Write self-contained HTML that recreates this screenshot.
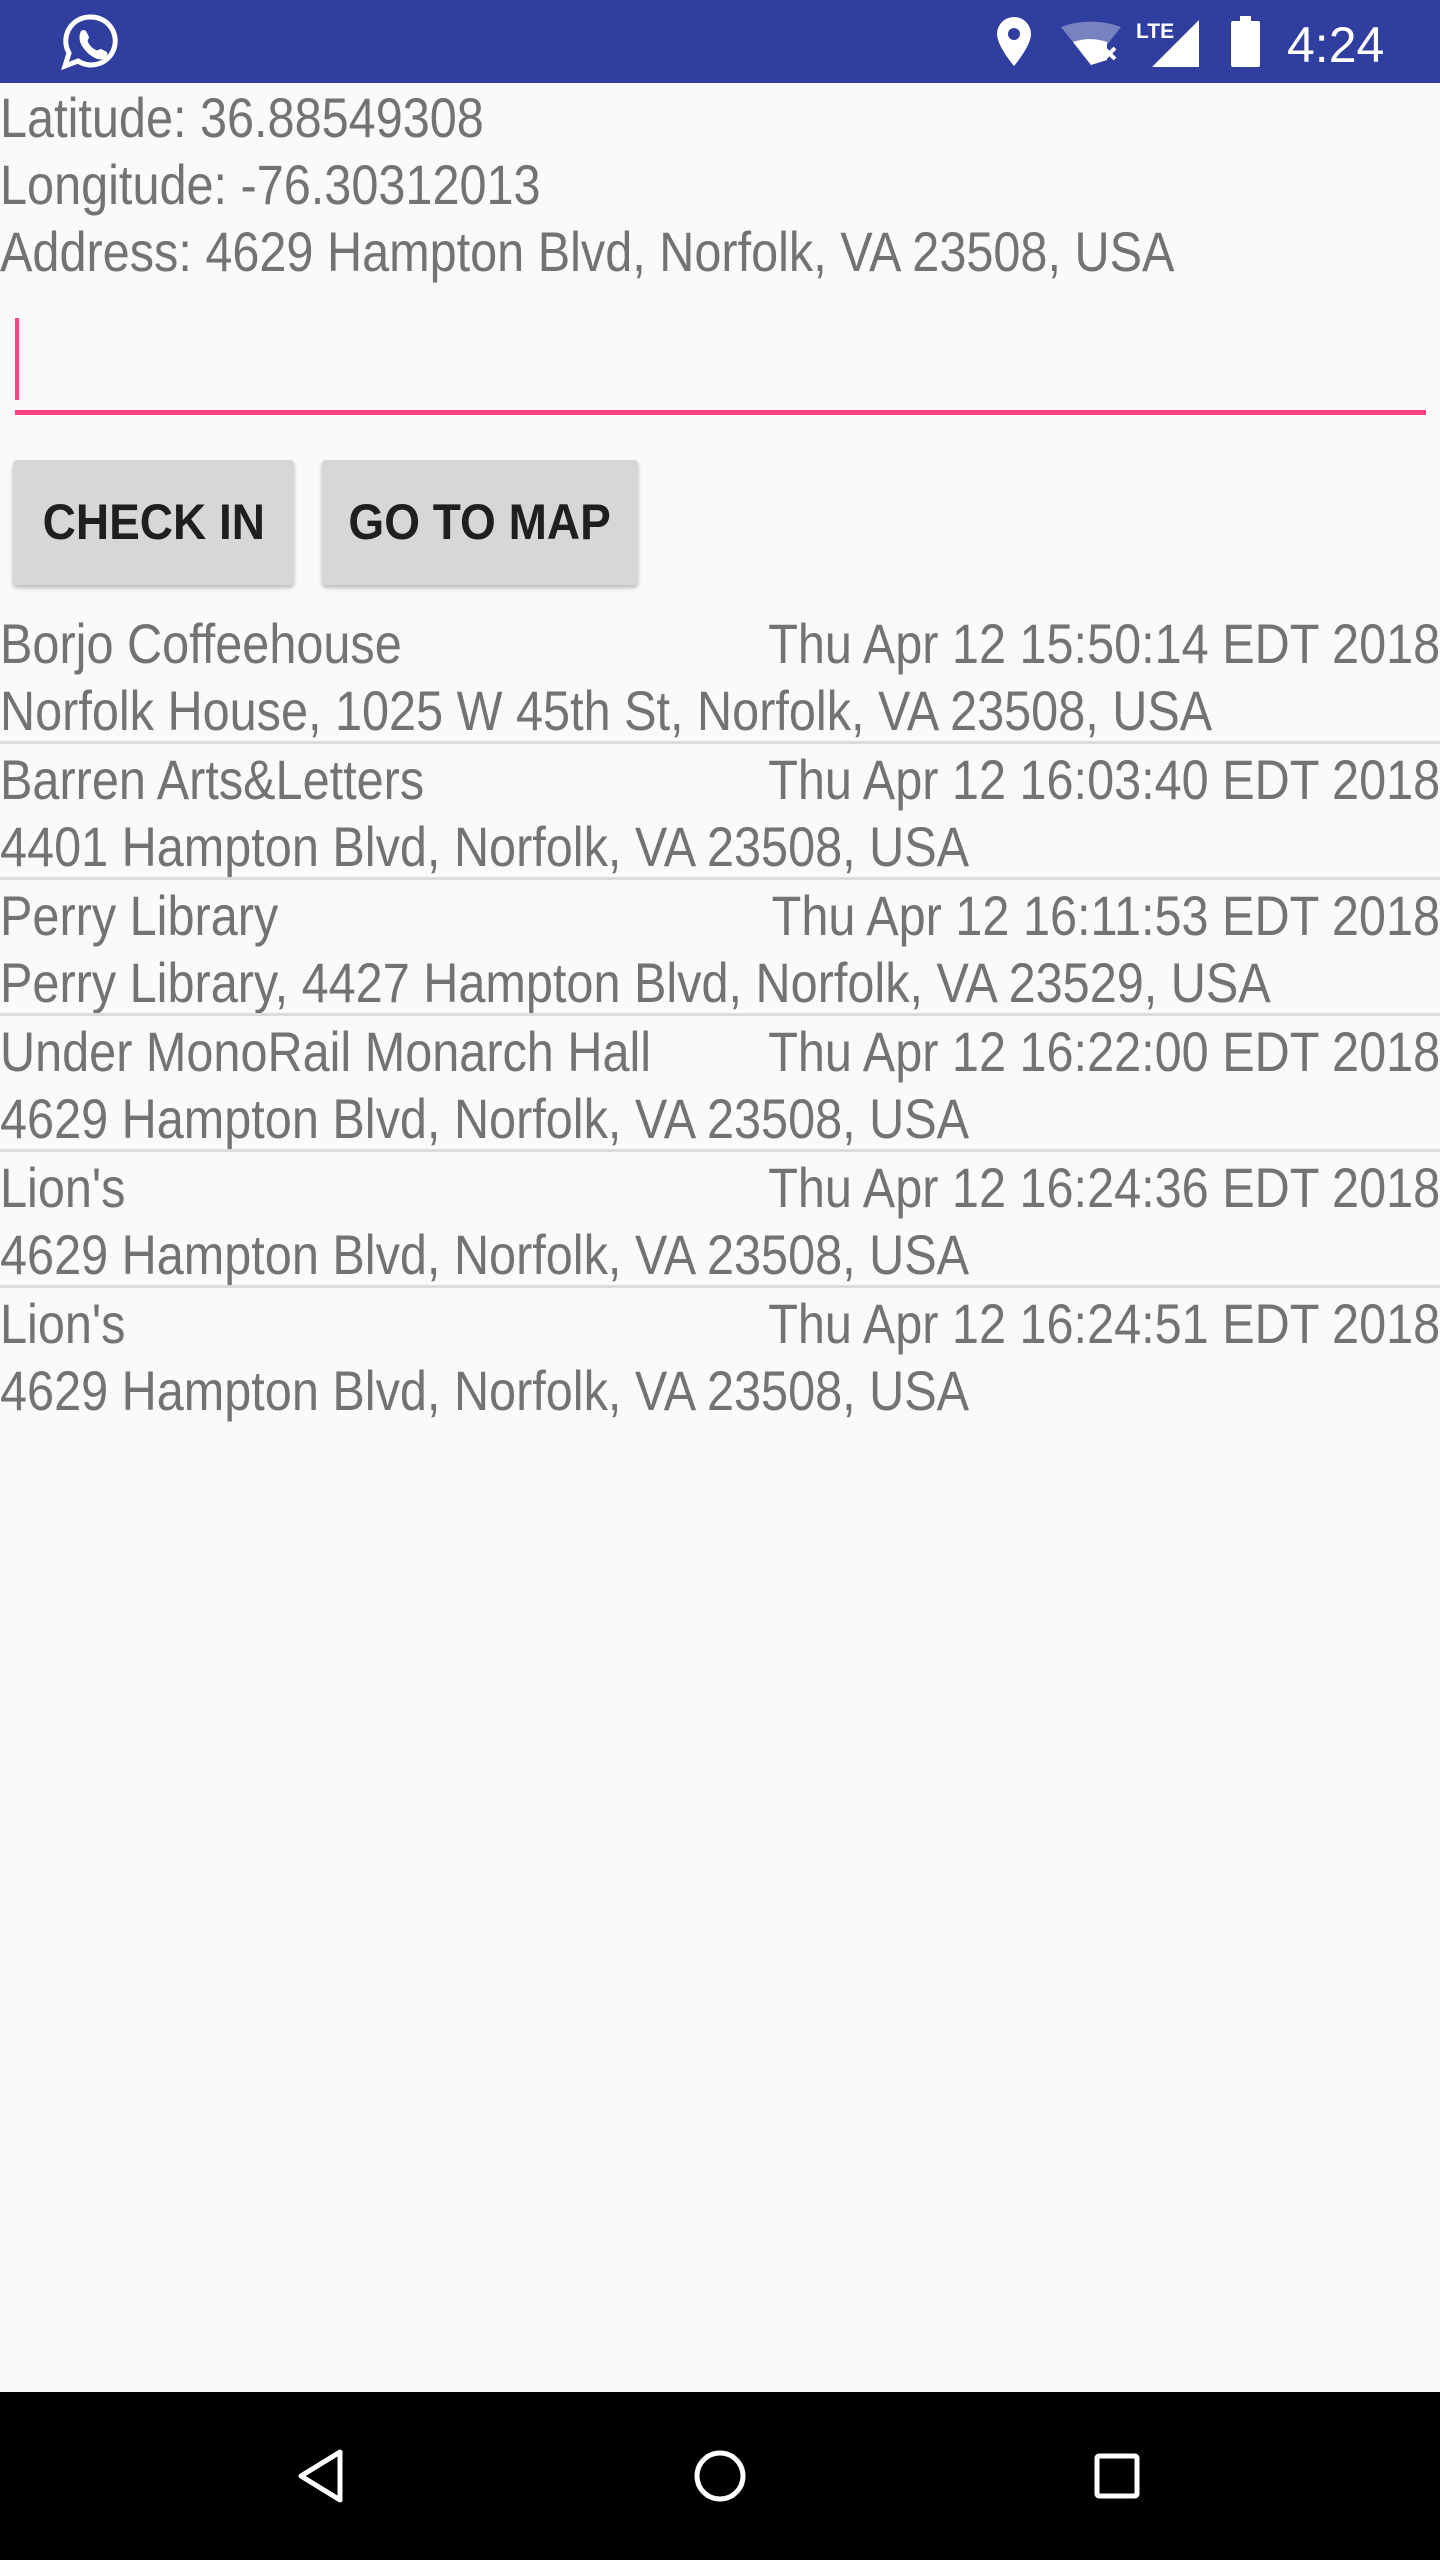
<!DOCTYPE html>
<html><head><meta charset="utf-8"><style>
*{margin:0;padding:0;box-sizing:border-box}
body{width:1440px;height:2560px;background:#FAFAFA;position:relative;overflow:hidden;font-family:"Liberation Sans",sans-serif;color:#737373}
.sb{position:absolute;left:0;top:0;width:1440px;height:83px;background:#303F9F}
.t{position:absolute;left:0;font-size:56px;line-height:67px;white-space:nowrap;transform:scaleX(.868);transform-origin:left center}
.r{position:absolute;right:0;font-size:56px;line-height:67px;white-space:nowrap;transform:scaleX(.868);transform-origin:right center}
.btn{position:absolute;top:460px;height:125px;background:#D6D7D7;border-radius:4px;box-shadow:0 3px 4px rgba(0,0,0,.25);color:#1f1f1f;font-size:50px;font-weight:bold;line-height:125px;text-align:center}
.btn span{display:inline-block;transform:scaleX(.92)}
.div{position:absolute;left:0;width:1440px;height:3px;background:#DCDCDC}
.nav{position:absolute;left:0;top:2392px;width:1440px;height:168px;background:#000}
</style></head><body>
<div class="sb">
<svg width="1440" height="83" style="position:absolute;left:0;top:0">
<g fill="none" stroke="#fff" stroke-width="5"><path d="M90 17a24 24 0 1 1-12 44l-13 5 4-13a24 24 0 0 1 21-36z"/></g>
<path d="M81 31c2-2 5-1 6 2l2 4c0 2-2 3-1 5 2 4 4 6 8 8 2 1 3-1 5-1l4 2c3 1 3 4 1 6-3 3-7 3-11 1-6-3-11-8-14-14-2-4-2-9 0-13z" fill="#fff"/>
<path d="M1014 17a17 17 0 0 1 17 17c0 12-17 32-17 32s-17-20-17-32a17 17 0 0 1 17-17z" fill="#fff"/><circle cx="1014" cy="34" r="6" fill="#303F9F"/>
<path d="M1061 27a60 40 0 0 1 60 0l-30 38z" fill="#fff" opacity=".35"/>
<path d="M1073 42a40 30 0 0 1 34 0v18l-16 5z" fill="#fff"/>
<path d="M1104 48l11 11M1115 48l-11 11" stroke="#fff" stroke-width="4"/>
<text x="1136" y="38" fill="#fff" font-family="Liberation Sans" font-weight="bold" font-size="21">LTE</text>
<path d="M1199 20v47h-47z" fill="#fff"/>
<rect x="1231" y="21" width="29" height="46" rx="2" fill="#fff"/><rect x="1240" y="16" width="11" height="6" fill="#fff"/>
<text x="1287" y="62" fill="#fff" font-family="Liberation Sans" font-size="50">4:24</text>
</svg>
</div>
<div class="t" style="top:84px">Latitude: 36.88549308</div>
<div class="t" style="top:151px">Longitude: -76.30312013</div>
<div class="t" style="top:218px">Address: 4629 Hampton Blvd, Norfolk, VA 23508, USA</div>
<div style="position:absolute;left:15px;top:318px;width:4px;height:82px;background:#FF4081"></div>
<div style="position:absolute;left:15px;top:410px;width:1411px;height:5px;background:#FF4081"></div>
<div class="btn" style="left:13px;width:281px"><span>CHECK IN</span></div>
<div class="btn" style="left:322px;width:316px"><span>GO TO MAP</span></div>

<div class="t" style="top:610px">Borjo Coffeehouse</div><div class="r" style="top:610px">Thu Apr 12 15:50:14 EDT 2018</div>
<div class="t" style="top:677px">Norfolk House, 1025 W 45th St, Norfolk, VA 23508, USA</div>
<div class="div" style="top:741px"></div>
<div class="t" style="top:746px">Barren Arts&amp;Letters</div><div class="r" style="top:746px">Thu Apr 12 16:03:40 EDT 2018</div>
<div class="t" style="top:813px">4401 Hampton Blvd, Norfolk, VA 23508, USA</div>
<div class="div" style="top:877px"></div>
<div class="t" style="top:882px">Perry Library</div><div class="r" style="top:882px">Thu Apr 12 16:11:53 EDT 2018</div>
<div class="t" style="top:949px">Perry Library, 4427 Hampton Blvd, Norfolk, VA 23529, USA</div>
<div class="div" style="top:1013px"></div>
<div class="t" style="top:1018px">Under MonoRail Monarch Hall</div><div class="r" style="top:1018px">Thu Apr 12 16:22:00 EDT 2018</div>
<div class="t" style="top:1085px">4629 Hampton Blvd, Norfolk, VA 23508, USA</div>
<div class="div" style="top:1149px"></div>
<div class="t" style="top:1154px">Lion's</div><div class="r" style="top:1154px">Thu Apr 12 16:24:36 EDT 2018</div>
<div class="t" style="top:1221px">4629 Hampton Blvd, Norfolk, VA 23508, USA</div>
<div class="div" style="top:1285px"></div>
<div class="t" style="top:1290px">Lion's</div><div class="r" style="top:1290px">Thu Apr 12 16:24:51 EDT 2018</div>
<div class="t" style="top:1357px">4629 Hampton Blvd, Norfolk, VA 23508, USA</div>

<div class="nav">
<svg width="1440" height="168" style="position:absolute;left:0;top:0" fill="none" stroke="#fff" stroke-width="5">
<path d="M340 60v48l-39-24z" stroke-linejoin="round"/>
<circle cx="720" cy="84" r="23"/>
<rect x="1097" y="64" width="40" height="40" rx="2"/>
</svg>
</div>
</body></html>
